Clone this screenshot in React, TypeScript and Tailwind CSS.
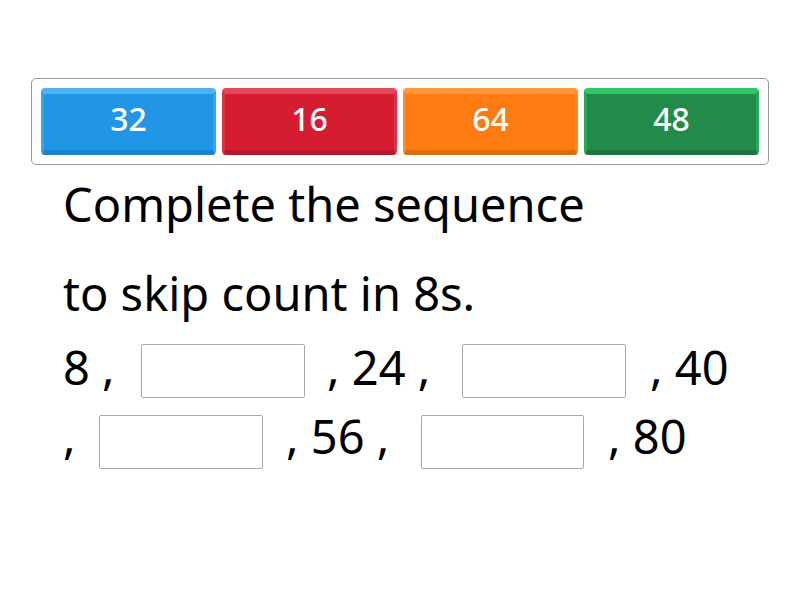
import React from "react";

const buttons = [
  { label: "32", cls: "bg-[#2196e6] border-t-[#4fb0f2] border-x-[#3aa4ee] border-b-[#1884cf]" },
  { label: "16", cls: "bg-[#d61c31] border-t-[#e24a5b] border-x-[#dc3346] border-b-[#b8182a]" },
  { label: "64", cls: "bg-[#fe7a12] border-t-[#ff9638] border-x-[#ff8a26] border-b-[#e06a08]" },
  { label: "48", cls: "bg-[#228b4a] border-t-[#2ec866] border-x-[#29a85a] border-b-[#1c7540]" },
];

function Box({ w }: { w: string }) {
  return <span className={`block shrink-0 ${w} h-[54px] border border-[#a8a8a8] rounded-[2px] bg-white`} />;
}

export default function App() {
  return (
    <div className="w-[800px] h-[600px] bg-white text-black" style={{ fontFamily: '"Noto Sans", sans-serif' }}>
      <div className="pt-[78px] px-[31px]">
        <div className="border border-[#9a9a9a] rounded-[5px] h-[87px] px-[9px] py-[9px] flex gap-[6px]">
          {buttons.map((b) => (
            <div
              key={b.label}
              className={`flex-1 rounded-[4px] border-t-[6px] border-x-[3px] border-b-[5px] flex items-center justify-center pb-[7px] text-white text-[32px] font-medium leading-none ${b.cls}`}
            >
              {b.label}
            </div>
          ))}
        </div>
      </div>
      <div className="pl-[63px] text-[47px] leading-none">
        <div className="mt-[16px] h-[47px] whitespace-nowrap">Complete the sequence</div>
        <div className="mt-[42px] h-[47px] whitespace-nowrap">to skip count in 8s.</div>
        <div className="mt-[27px] flex items-start h-[54px] whitespace-nowrap">
          <span className="w-[78px] shrink-0">8 ,</span>
          <Box w="w-[164px]" />
          <span className="w-[157px] shrink-0 pl-[22px]">, 24 ,</span>
          <Box w="w-[164px]" />
          <span className="pl-[24px]">, 40</span>
        </div>
        <div className="mt-[17px] flex items-start h-[54px] whitespace-nowrap">
          <span className="w-[36px] shrink-0 -mt-[2px]">,</span>
          <Box w="w-[164px]" />
          <span className="w-[158px] shrink-0 pl-[23px] -mt-[2px]">, 56 ,</span>
          <Box w="w-[163px]" />
          <span className="pl-[24px] -mt-[2px]">, 80</span>
        </div>
      </div>
    </div>
  );
}
